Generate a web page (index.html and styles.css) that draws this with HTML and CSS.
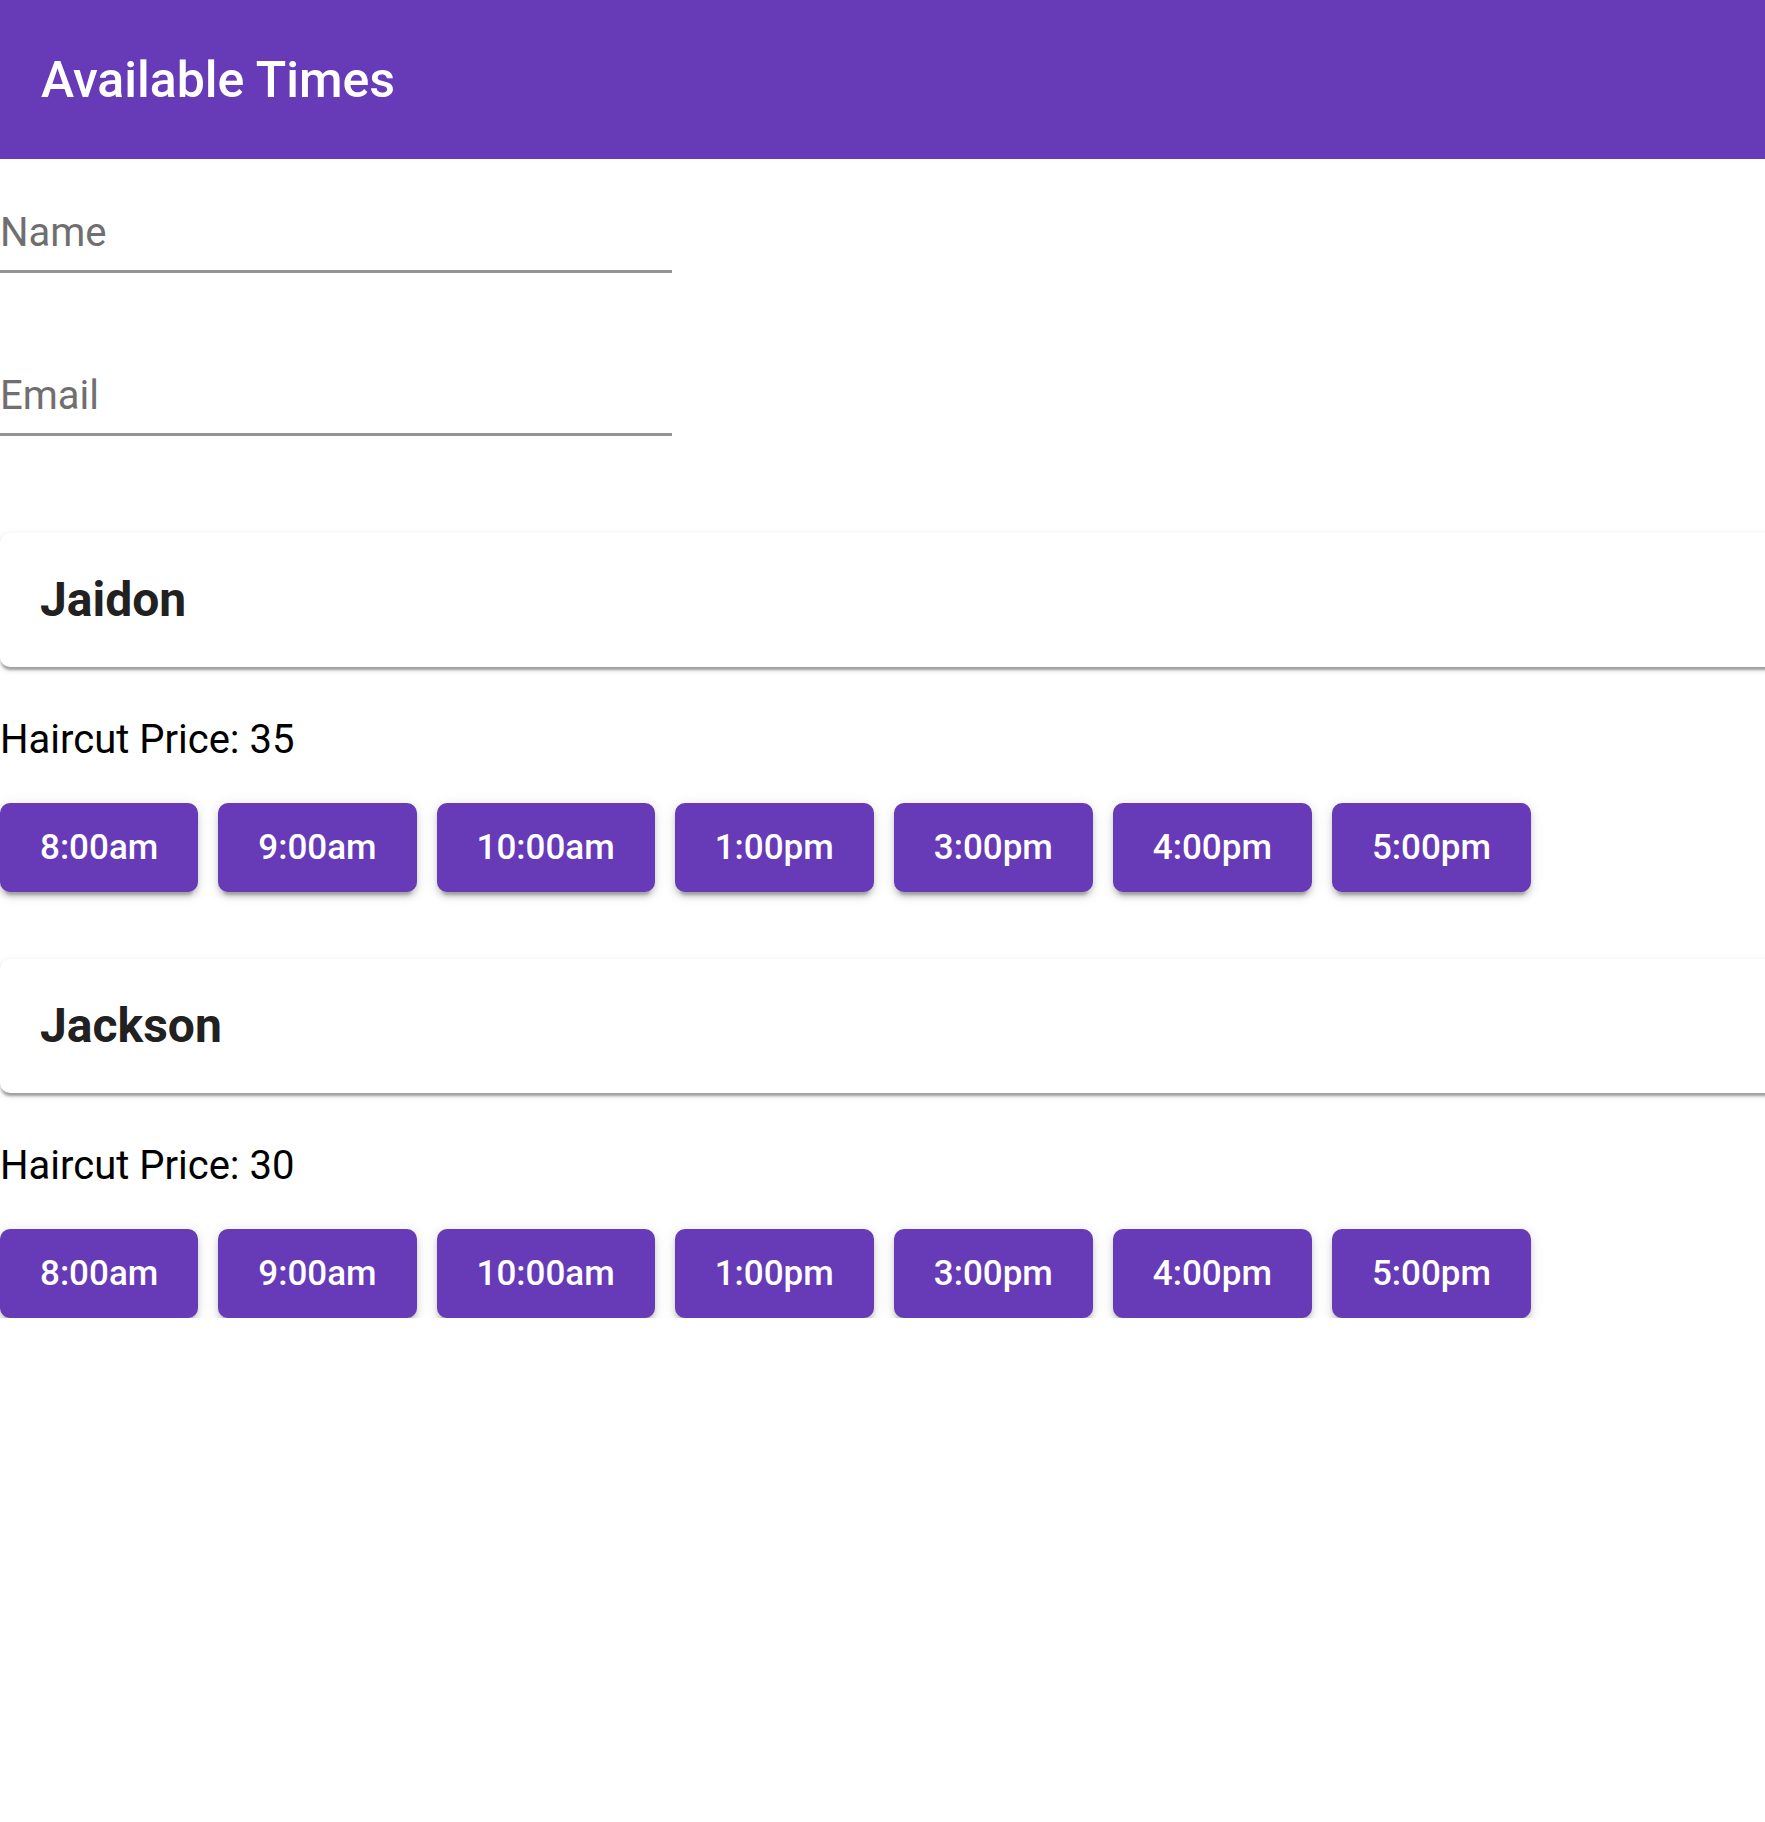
FILE: index.html
```html
<!DOCTYPE html>
<html lang="en">
<head>
<meta charset="utf-8">
<title>Available Times</title>
<link rel="stylesheet" href="styles.css">
</head>
<body>
<header class="app-bar">
  <h1 class="app-title">Available Times</h1>
</header>
<main class="content">
  <form class="fields">
    <label class="field field-name"><input class="field-input" type="text" placeholder="Name"></label>
    <label class="field field-email"><input class="field-input" type="email" placeholder="Email"></label>
  </form>

  <section class="barber">
    <div class="card"><h2 class="card-title">Jaidon</h2></div>
    <p class="price">Haircut Price: 35</p>
    <div class="times">
      <button class="time-btn">8:00am</button>
      <button class="time-btn">9:00am</button>
      <button class="time-btn">10:00am</button>
      <button class="time-btn">1:00pm</button>
      <button class="time-btn">3:00pm</button>
      <button class="time-btn">4:00pm</button>
      <button class="time-btn">5:00pm</button>
    </div>
  </section>

  <section class="barber">
    <div class="card"><h2 class="card-title">Jackson</h2></div>
    <p class="price">Haircut Price: 30</p>
    <div class="times">
      <button class="time-btn">8:00am</button>
      <button class="time-btn">9:00am</button>
      <button class="time-btn">10:00am</button>
      <button class="time-btn">1:00pm</button>
      <button class="time-btn">3:00pm</button>
      <button class="time-btn">4:00pm</button>
      <button class="time-btn">5:00pm</button>
    </div>
  </section>
</main>
</body>
</html>
```

FILE: styles.css
```css
html, body {
  margin: 0;
  padding: 0;
  background: #ffffff;
  overflow-x: hidden;
}
body {
  font-family: Roboto, "Liberation Sans", Arial, sans-serif;
  color: #000;
}
.app-bar {
  background: #673ab7;
  height: 159px;
  display: flex;
  align-items: center;
  padding: 0 41px;
  position: relative;
  z-index: 1;
}
.app-title {
  margin: 0;
  color: #fff;
  font-size: 50px;
  font-weight: 500;
  line-height: 80px;
}
.content {
  display: flex;
  flex-direction: column;
}
.fields {
  display: flex;
  flex-direction: column;
  gap: 94px;
  padding-top: 45px;
}
.field {
  display: block;
  width: 672px;
  border-bottom: 3px solid #949494;
  padding-bottom: 8px;
}
.field-input {
  display: block;
  width: 100%;
  box-sizing: border-box;
  border: 0;
  outline: 0;
  padding: 0;
  margin: 0;
  background: transparent;
  font-family: inherit;
  font-size: 40px;
  line-height: 58px;
  height: 58px;
  color: #222;
}
.field-input::placeholder {
  color: #6f6f6f;
  opacity: 1;
}
.barber {
  display: flex;
  flex-direction: column;
}
.fields + .barber {
  margin-top: 97px;
}
.barber + .barber {
  margin-top: 67px;
}
.card {
  width: calc(100% + 40px);
  background: #fff;
  border-radius: 10px;
  padding: 40px;
  box-sizing: border-box;
  box-shadow: 0 5px 2.5px -2.5px rgba(0,0,0,0.2), 0 2.5px 2.5px 0 rgba(0,0,0,0.14), 0 2.5px 7.5px 0 rgba(0,0,0,0.12);
}
.card-title {
  margin: 0;
  font-size: 48px;
  font-weight: 700;
  line-height: 54px;
  color: #212121;
}
.price {
  margin: 43px 0 0;
  font-size: 40px;
  line-height: 60px;
  color: #000;
}
.times {
  display: flex;
  gap: 20px;
  margin-top: 33px;
}
.time-btn {
  border: 0;
  border-radius: 10px;
  background: #673ab7;
  color: #fff;
  font-family: inherit;
  font-size: 35px;
  font-weight: 500;
  line-height: 61px;
  padding: 14px 40px;
  cursor: pointer;
  box-shadow: 0 7.5px 2.5px -5px rgba(0,0,0,0.2), 0 5px 5px 0 rgba(0,0,0,0.14), 0 2.5px 12.5px 0 rgba(0,0,0,0.12);
}
```
